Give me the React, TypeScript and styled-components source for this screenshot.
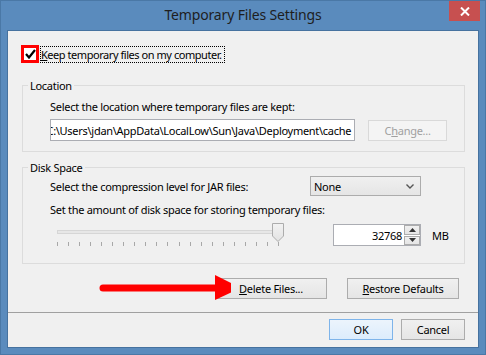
import React from 'react';
import styled, { createGlobalStyle } from 'styled-components';

const GlobalStyle = createGlobalStyle`
    html, body {
        margin: 0;
        padding: 0;
    }
    body {
        font-family: "Noto Sans", "Open Sans", sans-serif;
        font-size: 11px;
        letter-spacing: -0.28px;
        color: #000;
    }
`;

const Window = styled.div`
    width: 486px;
    height: 355px;
    box-sizing: border-box;
    background: #5a8bbd;
    border: 1px solid #4a78a6;
    padding: 0 7px 7px;
    display: flex;
    flex-direction: column;
`;

const TitleBar = styled.div`
    height: 30px;
    margin: 0 -7px;
    display: grid;
    grid-template-columns: 1fr auto 1fr;
    align-items: start;
`;

const Title = styled.div`
    grid-column: 2;
    font-size: 14px;
    letter-spacing: -0.15px;
    color: #1e1e1e;
    line-height: 20px;
    margin-top: 4px;
`;

const CloseButton = styled.div`
    grid-column: 3;
    justify-self: end;
    margin-right: 5px;
    width: 31px;
    height: 20px;
    background: #c75050;
    display: flex;
    align-items: center;
    justify-content: center;
`;

const Client = styled.div`
    flex: 1;
    background: #f0f0f0;
    box-shadow: 0 0 0 1px #46729f;
    display: flex;
    flex-direction: column;
`;

const Main = styled.div`
    padding: 14px 13px 13px 14px;
    display: flex;
    flex-direction: column;
`;

const CheckRow = styled.div`
    display: flex;
    align-items: center;
    height: 18px;
    margin-left: -1px;
    gap: 1px;
`;

const Highlight = styled.span`
    width: 12px;
    height: 12px;
    border: 3px solid #ff0000;
    background: #fff;
    display: flex;
    align-items: center;
    justify-content: center;
`;

const FocusLabel = styled.span`
    border: 1px dotted #000;
    box-sizing: border-box;
    height: 17px;
    line-height: 15px;
    padding-right: 2px;
    letter-spacing: -0.45px;
    white-space: nowrap;
`;

const Group = styled.fieldset<{ $top: number; $bottom: number }>`
    margin: ${p => p.$top}px 0 0;
    border: 1px solid #dcdcdc;
    padding: 0 17px ${p => p.$bottom}px 27px;
    min-width: 0;
`;

const Legend = styled.legend`
    margin-left: -22px;
    padding: 0 2px;
    line-height: 15px;
`;

const Text = styled.div<{ $mt?: number }>`
    line-height: 15px;
    margin-top: ${p => p.$mt ?? 0}px;
    white-space: nowrap;
`;

const FieldRow = styled.div`
    display: flex;
    align-items: center;
    gap: 13px;
    margin-top: 5px;
`;

const PathField = styled.div`
    width: 306px;
    height: 22px;
    box-sizing: border-box;
    border: 1px solid #abadb3;
    background: #fff;
    display: flex;
    align-items: center;
    justify-content: flex-end;
    padding-right: 3px;
    overflow: hidden;
    white-space: nowrap;
`;

const Button = styled.div<{ $w: number; $primary?: boolean; $disabled?: boolean }>`
    width: ${p => p.$w}px;
    height: 21px;
    box-sizing: border-box;
    border: 1px solid ${p => (p.$primary ? '#7eb4ea' : p.$disabled ? '#d9d9d9' : '#acacac')};
    background: ${p =>
        p.$primary
            ? 'linear-gradient(#ecf4fc, #dcecfc)'
            : p.$disabled
            ? '#f4f4f4'
            : 'linear-gradient(#f0f0f0, #e5e5e5)'};
    color: ${p => (p.$disabled ? '#a0a0a0' : '#000')};
    display: flex;
    align-items: center;
    justify-content: center;
    white-space: nowrap;
`;

const DiskRow = styled.div<{ $mt: number }>`
    display: flex;
    align-items: center;
    margin-top: ${p => p.$mt}px;
`;

const Select = styled.div`
    margin-left: auto;
    margin-right: 26px;
    width: 111px;
    height: 20px;
    box-sizing: border-box;
    border: 1px solid #acacac;
    background: linear-gradient(#f0f0f0, #e5e5e5);
    display: flex;
    align-items: center;
    justify-content: space-between;
    padding: 0 6px 0 3px;
`;

const Slider = styled.div`
    margin-left: 7px;
    width: 228px;
    height: 24px;
    display: flex;
    flex-direction: column;
`;

const TrackRow = styled.div`
    height: 18px;
    display: flex;
    align-items: center;
`;

const Track = styled.div`
    width: 216px;
    height: 4px;
    box-sizing: border-box;
    border: 1px solid #d6d6d6;
    background: #e7e7e7;
`;

const Ticks = styled.div`
    display: flex;
    justify-content: space-between;
    width: 222px;
    height: 4px;
    margin-top: 1px;
`;

const Tick = styled.span`
    width: 1px;
    height: 4px;
    background: #a8a8a8;
`;

const Spinner = styled.div`
    margin-left: auto;
    width: 88px;
    height: 22px;
    box-sizing: border-box;
    border: 1px solid #abadb3;
    background: #fff;
    display: flex;
    align-items: center;
`;

const SpinValue = styled.span`
    flex: 1;
    text-align: right;
    padding-right: 2px;
`;

const SpinButtons = styled.div`
    width: 16px;
    height: 20px;
    display: flex;
    flex-direction: column;
    gap: 1px;
`;

const SpinButton = styled.div`
    flex: 1;
    box-sizing: border-box;
    border: 1px solid #acacac;
    background: linear-gradient(#f0f0f0, #e5e5e5);
    display: flex;
    align-items: center;
    justify-content: center;
`;

const Unit = styled.span`
    width: 15px;
    margin-left: 11px;
`;

const ButtonRow = styled.div`
    position: relative;
    display: flex;
    justify-content: flex-end;
    gap: 20px;
    margin-top: 14px;
    padding-right: 6px;
`;

const Arrow = styled.svg`
    position: absolute;
    left: 64px;
    top: -4px;
`;

const Footer = styled.div`
    border-top: 1px solid #a0a0a0;
    flex: 1;
    display: flex;
    justify-content: flex-end;
    align-items: flex-start;
    gap: 8px;
    padding: 6px 13px 0 0;
`;

const U = styled.span`
    text-decoration: underline;
`;

export default function App() {
    const ticks = Array.from({ length: 21 });
    return (
        <>
            <GlobalStyle />
            <Window>
                <TitleBar>
                    <Title>Temporary Files Settings</Title>
                    <CloseButton>
                        <svg width="10" height="9" viewBox="0 0 10 9">
                            <path d="M1 0.5 L9 8.5 M9 0.5 L1 8.5" stroke="#fff" strokeWidth="2" />
                        </svg>
                    </CloseButton>
                </TitleBar>
                <Client>
                    <Main>
                        <CheckRow>
                            <Highlight>
                                <svg width="11" height="10" viewBox="0 0 11 10">
                                    <path d="M1 5 L4 8.5 L10 1" fill="none" stroke="#000" strokeWidth="2.2" />
                                </svg>
                            </Highlight>
                            <FocusLabel>
                                <U>K</U>eep temporary files on my computer.
                            </FocusLabel>
                        </CheckRow>

                        <Group $top={15} $bottom={10}>
                            <Legend>Location</Legend>
                            <Text $mt={6}>Select the location where temporary files are kept:</Text>
                            <FieldRow>
                                <PathField>{'C:\\Users\\jdan\\AppData\\LocalLow\\Sun\\Java\\Deployment\\cache'}</PathField>
                                <Button $w={79} $disabled>
                                    <span>
                                        C<U>h</U>ange...
                                    </span>
                                </Button>
                            </FieldRow>
                        </Group>

                        <Group $top={8} $bottom={16}>
                            <Legend>Disk Space</Legend>
                            <DiskRow $mt={1}>
                                <span>Select the compression level for JAR files:</span>
                                <Select>
                                    <span>None</span>
                                    <svg width="8" height="5" viewBox="0 0 8 5">
                                        <path d="M0.5 0.5 L4 4 L7.5 0.5" fill="none" stroke="#555" strokeWidth="1.4" />
                                    </svg>
                                </Select>
                            </DiskRow>
                            <Text $mt={6}>Set the amount of disk space for storing temporary files:</Text>
                            <DiskRow $mt={6}>
                                <Slider>
                                    <TrackRow>
                                        <Track />
                                        <svg width="12" height="19" viewBox="0 0 12 19" style={{ marginLeft: -1 }}>
                                            <defs>
                                                <linearGradient id="thumb" x1="0" y1="0" x2="0" y2="1">
                                                    <stop offset="0" stopColor="#f2f2f2" />
                                                    <stop offset="1" stopColor="#e2e2e2" />
                                                </linearGradient>
                                            </defs>
                                            <path d="M0.5 0.5 H11.5 V13 L6 18.5 L0.5 13 Z" fill="url(#thumb)" stroke="#acacac" />
                                        </svg>
                                    </TrackRow>
                                    <Ticks>
                                        {ticks.map((_, i) => (
                                            <Tick key={i} />
                                        ))}
                                    </Ticks>
                                </Slider>
                                <Spinner>
                                    <SpinValue>32768</SpinValue>
                                    <SpinButtons>
                                        <SpinButton>
                                            <svg width="7" height="4" viewBox="0 0 7 4">
                                                <path d="M0 4 L3.5 0 L7 4 Z" fill="#333" />
                                            </svg>
                                        </SpinButton>
                                        <SpinButton>
                                            <svg width="7" height="4" viewBox="0 0 7 4">
                                                <path d="M0 0 L3.5 4 L7 0 Z" fill="#333" />
                                            </svg>
                                        </SpinButton>
                                    </SpinButtons>
                                </Spinner>
                                <Unit>MB</Unit>
                            </DiskRow>
                        </Group>

                        <ButtonRow>
                            <Arrow width="145" height="28" viewBox="0 0 145 28">
                                <path d="M17 14 H132" stroke="#ff0000" strokeWidth="7" strokeLinecap="round" />
                                <path d="M129 1 L155 14 L129 26 Z" fill="#ff0000" />
                            </Arrow>
                            <Button $w={112}>
                                <span>
                                    <U>D</U>elete Files...
                                </span>
                            </Button>
                            <Button $w={112}>
                                <span>
                                    <U>R</U>estore Defaults
                                </span>
                            </Button>
                        </ButtonRow>
                    </Main>
                    <Footer>
                        <Button $w={64} $primary>
                            OK
                        </Button>
                        <Button $w={64}>Cancel</Button>
                    </Footer>
                </Client>
            </Window>
        </>
    );
}
